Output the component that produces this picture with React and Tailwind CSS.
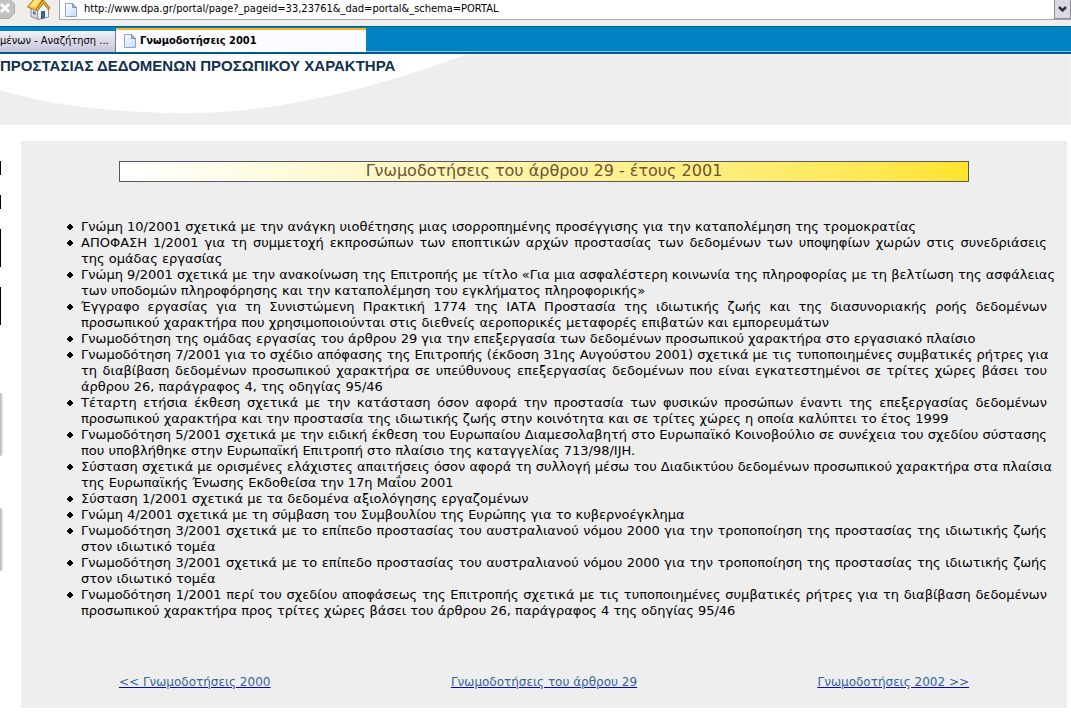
// Each opinion is a list of lines, kept apart on wide windows and run together on narrow ones
const opinions = [
  ['Γνώμη 10/2001 σχετικά με την ανάγκη υιοθέτησης μιας ισορροπημένης προσέγγισης για την καταπολέμηση της τρομοκρατίας'],
  [
    'ΑΠΟΦΑΣΗ 1/2001 για τη συμμετοχή εκπροσώπων των εποπτικών αρχών προστασίας των δεδομένων των υποψηφίων χωρών στις συνεδριάσεις',
    'της ομάδας εργασίας',
  ],
  [
    'Γνώμη 9/2001 σχετικά με την ανακοίνωση της Επιτροπής με τίτλο «Για μια ασφαλέστερη κοινωνία της πληροφορίας με τη βελτίωση της ασφάλειας',
    'των υποδομών πληροφόρησης και την καταπολέμηση του εγκλήματος πληροφορικής»',
  ],
  [
    'Έγγραφο εργασίας για τη Συνιστώμενη Πρακτική 1774 της ΙΑΤΑ Προστασία της ιδιωτικής ζωής και της διασυνοριακής ροής δεδομένων',
    'προσωπικού χαρακτήρα που χρησιμοποιούνται στις διεθνείς αεροπορικές μεταφορές επιβατών και εμπορευμάτων',
  ],
  ['Γνωμοδότηση της ομάδας εργασίας του άρθρου 29 για την επεξεργασία των δεδομένων προσωπικού χαρακτήρα στο εργασιακό πλαίσιο'],
  [
    'Γνωμοδότηση 7/2001 για το σχέδιο απόφασης της Επιτροπής (έκδοση 31ης Αυγούστου 2001) σχετικά με τις τυποποιημένες συμβατικές ρήτρες για',
    'τη διαβίβαση δεδομένων προσωπικού χαρακτήρα σε υπεύθυνους επεξεργασίας δεδομένων που είναι εγκατεστημένοι σε τρίτες χώρες βάσει του',
    'άρθρου 26, παράγραφος 4, της οδηγίας 95/46',
  ],
  [
    'Τέταρτη ετήσια έκθεση σχετικά με την κατάσταση όσον αφορά την προστασία των φυσικών προσώπων έναντι της επεξεργασίας δεδομένων',
    'προσωπικού χαρακτήρα και την προστασία της ιδιωτικής ζωής στην κοινότητα και σε τρίτες χώρες η οποία καλύπτει το έτος 1999',
  ],
  [
    'Γνωμοδότηση 5/2001 σχετικά με την ειδική έκθεση του Ευρωπαίου Διαμεσολαβητή στο Ευρωπαϊκό Κοινοβούλιο σε συνέχεια του σχεδίου σύστασης',
    'που υποβλήθηκε στην Ευρωπαϊκή Επιτροπή στο πλαίσιο της καταγγελίας 713/98/IJH.',
  ],
  [
    'Σύσταση σχετικά με ορισμένες ελάχιστες απαιτήσεις όσον αφορά τη συλλογή μέσω του Διαδικτύου δεδομένων προσωπικού χαρακτήρα στα πλαίσια',
    'της Ευρωπαϊκής Ένωσης Εκδοθείσα την 17η Μαΐου 2001',
  ],
  ['Σύσταση 1/2001 σχετικά με τα δεδομένα αξιολόγησης εργαζομένων'],
  ['Γνώμη 4/2001 σχετικά με τη σύμβαση του Συμβουλίου της Ευρώπης για το κυβερνοέγκλημα'],
  [
    'Γνωμοδότηση 3/2001 σχετικά με το επίπεδο προστασίας του αυστραλιανού νόμου 2000 για την τροποποίηση της προστασίας της ιδιωτικής ζωής',
    'στον ιδιωτικό τομέα',
  ],
  [
    'Γνωμοδότηση 3/2001 σχετικά με το επίπεδο προστασίας του αυστραλιανού νόμου 2000 για την τροποποίηση της προστασίας της ιδιωτικής ζωής',
    'στον ιδιωτικό τομέα',
  ],
  [
    'Γνωμοδότηση 1/2001 περί του σχεδίου αποφάσεως της Επιτροπής σχετικά με τις τυποποιημένες συμβατικές ρήτρες για τη διαβίβαση δεδομένων',
    'προσωπικού χαρακτήρα προς τρίτες χώρες βάσει του άρθρου 26, παράγραφος 4 της οδηγίας 95/46',
  ],
];

const PageIcon = () => (
  <svg width="12" height="14" viewBox="0 0 12 14" className="shrink-0" aria-hidden="true">
    <defs>
      <linearGradient id="paper" x1="0" y1="0" x2="1" y2="1">
        <stop offset="0" stopColor="#ffffff" />
        <stop offset="1" stopColor="#c3dafa" />
      </linearGradient>
    </defs>
    <path d="M0.5 0.5H7.5L11.5 4.5V13.5H0.5Z" fill="url(#paper)" stroke="#8fa3d6" />
    <path d="M7.5 0.5V4.5H11.5Z" fill="#a9c8f5" stroke="#6f8fd0" />
  </svg>
);

const StopIcon = () => (
  <svg width="16" height="20" viewBox="0 0 16 20" aria-hidden="true">
    <path d="M-4 -1H9.5L14.5 4V13L9.5 18.5H-4Z" fill="#c2c2c2" stroke="#acacac" />
    <path d="M1 4L9 12M9 4L1 12" stroke="#ffffff" strokeWidth="3" />
  </svg>
);

const HomeIcon = () => (
  <svg width="24" height="20" viewBox="0 0 24 20" aria-hidden="true">
    <path d="M4 7L11 9V19.5L4 16.5Z" fill="#d5d9e2" stroke="#8b909b" />
    <path d="M10.5 10L16.5 3L21.5 9V17L11 19.5Z" fill="#f6f7fa" stroke="#8b909b" />
    <path d="M0.5 7L8 -2H16L9.5 10.5Z" fill="#f6c944" stroke="#a97713" />
    <path d="M3 6L8.5 -1H14L9 7Z" fill="#ffe27a" />
    <path d="M9.5 10.5L16 1.5L22.5 9" fill="none" stroke="#a97713" strokeWidth="3" />
    <path d="M10 10L16 1.5L22 8.5" fill="none" stroke="#f9d35b" />
    <path d="M14.5 11.5H17.5V17.5L14.5 18.5Z" fill="#3e6fae" stroke="#2b4c80" />
    <path d="M6 11L8.5 12V15L6 14Z" fill="#4a78b8" />
  </svg>
);

const Bullet = () => (
  <svg width="7" height="7" viewBox="0 0 7 7" className="mt-1 shrink-0" aria-hidden="true">
    <path d="M2 1H4V2H5V3H6V5H5V6H4V7H2V6H1V5H0V3H1V2H2Z" fill="#000" />
  </svg>
);

const BrowserChrome = () => (
  <header className="font-['DejaVu_Sans_Condensed','DejaVu_Sans',sans-serif] text-[11px] text-black">
    <div className="flex h-[26px] items-start bg-[#efeeeb]">
      <button type="button" aria-label="Stop" className="w-6">
        <StopIcon />
      </button>
      <button type="button" aria-label="Home" className="w-[35px] pl-[3px]">
        <HomeIcon />
      </button>
      <div className="flex h-5 flex-1 items-center border-b border-l border-[#a5a5ad] bg-white pl-[5px]">
        <PageIcon />
        <input
          type="text"
          aria-label="Address"
          defaultValue="http://www.dpa.gr/portal/page?_pageid=33,23761&_dad=portal&_schema=PORTAL"
          className="ml-[7px] h-4 min-w-0 flex-1 bg-transparent outline-none"
        />
        <button
          type="button"
          aria-label="Show history"
          className="flex h-[19px] w-[17px] items-center justify-center border border-t-0 border-[#8d8d9b] bg-[#d9d9e3]"
        >
          <svg width="9" height="7" viewBox="0 0 9 7" aria-hidden="true">
            <path d="M1 1L4.5 4.5L8 1" fill="none" stroke="#33333b" strokeWidth="2.5" />
          </svg>
        </button>
      </div>
    </div>
    <nav className="flex h-7 items-end border-t border-b-2 border-[#005a8e] bg-[#0081c3]">
      <a
        href="#search"
        className="flex h-[21px] w-[116px] items-center border-r border-[#77778b] bg-linear-to-b from-[#f2f2f7] to-[#c4c4da] whitespace-nowrap"
      >
        μένων - Αναζήτηση ...
      </a>
      <a
        href="#opinions"
        className="flex h-6 w-[250px] items-center border-t-2 border-[#ffb01f] bg-[#fcfbff] pl-2 font-bold"
      >
        <PageIcon />
        <span className="ml-1">Γνωμοδοτήσεις 2001</span>
      </a>
      <div className="h-full flex-1 border-b border-[#8cc3e2]" />
    </nav>
  </header>
);

const Banner = () => (
  <div className="grid h-[71px] overflow-hidden border-r-2 border-[#f3f0ea] bg-[#eeeeee]">
    <svg width="480" height="71" viewBox="0 0 480 71" className="col-start-1 row-start-1" aria-hidden="true">
      <path d="M0 0H467C420 18 300 59 190 59C120 59 50 52 0 36Z" fill="#fff" />
    </svg>
    <h1 className="z-10 col-start-1 row-start-1 flex h-6 items-center font-['Liberation_Sans',Arial,sans-serif] text-[15px] font-bold whitespace-nowrap text-[#12304f]">
      ΠΡΟΣΤΑΣΙΑΣ ΔΕΔΟΜΕΝΩΝ ΠΡΟΣΩΠΙΚΟΥ ΧΑΡΑΚΤΗΡΑ
    </h1>
  </div>
);

// Right edge of the side menu that stays in view
const SideEdge = () => (
  <div className="w-[21px] shrink-0 pt-5">
    <div className="flex flex-col gap-5">
      <div className="h-3.5 w-px bg-black" />
      <div className="h-3.5 w-px bg-black" />
      <div className="h-[38px] w-px bg-black" />
      <div className="h-[38px] w-px bg-black" />
    </div>
    <div className="mt-[68px] flex flex-col gap-[52px]">
      <div className="h-[63px] w-[3px] rounded-r-sm bg-linear-to-r from-[#b5b5b5] to-[#eeeeee]" />
      <div className="h-[63px] w-[3px] rounded-r-sm bg-linear-to-r from-[#b5b5b5] to-[#eeeeee]" />
    </div>
  </div>
);

const App = () => (
  <div className="min-h-screen overflow-hidden bg-white">
    <BrowserChrome />
    <Banner />
    <div className="flex pt-4 pr-1">
      <SideEdge />
      <main className="min-w-0 flex-1 bg-[#eeeeee] pt-5 pb-[18px] font-['DejaVu_Sans',sans-serif] text-[12px] leading-4 text-black">
        <h2 className="mx-[98px] h-[21px] border border-[#56566b] bg-linear-to-r from-white via-[#fff3a0] to-[#ffe428] text-center text-[16px] leading-[18px] text-[#6b5339]">
          Γνωμοδοτήσεις του άρθρου 29 - έτους 2001
        </h2>
        <ul className="mt-[37px] pr-5 pl-[46px] text-[13px] leading-4">
          {opinions.map((lines, i) => (
            <li key={i} className="flex gap-[7px]">
              <Bullet />
              <p className="min-w-0 flex-1 text-justify">
                {lines.map((line, j) => (
                  <span
                    key={j}
                    className="min-[1060px]:block min-[1060px]:whitespace-nowrap min-[1060px]:not-last:[text-align-last:justify]"
                  >
                    {line}{' '}
                  </span>
                ))}
              </p>
            </li>
          ))}
        </ul>
        <nav className="mx-[98px] mt-[55px] flex justify-between text-[#336699] underline decoration-[#0000ee]">
          <a href="#2000">&lt;&lt; Γνωμοδοτήσεις 2000</a>
          <a href="#article29">Γνωμοδοτήσεις του άρθρου 29</a>
          <a href="#2002">Γνωμοδοτήσεις 2002 &gt;&gt;</a>
        </nav>
      </main>
    </div>
  </div>
);

export default App;
